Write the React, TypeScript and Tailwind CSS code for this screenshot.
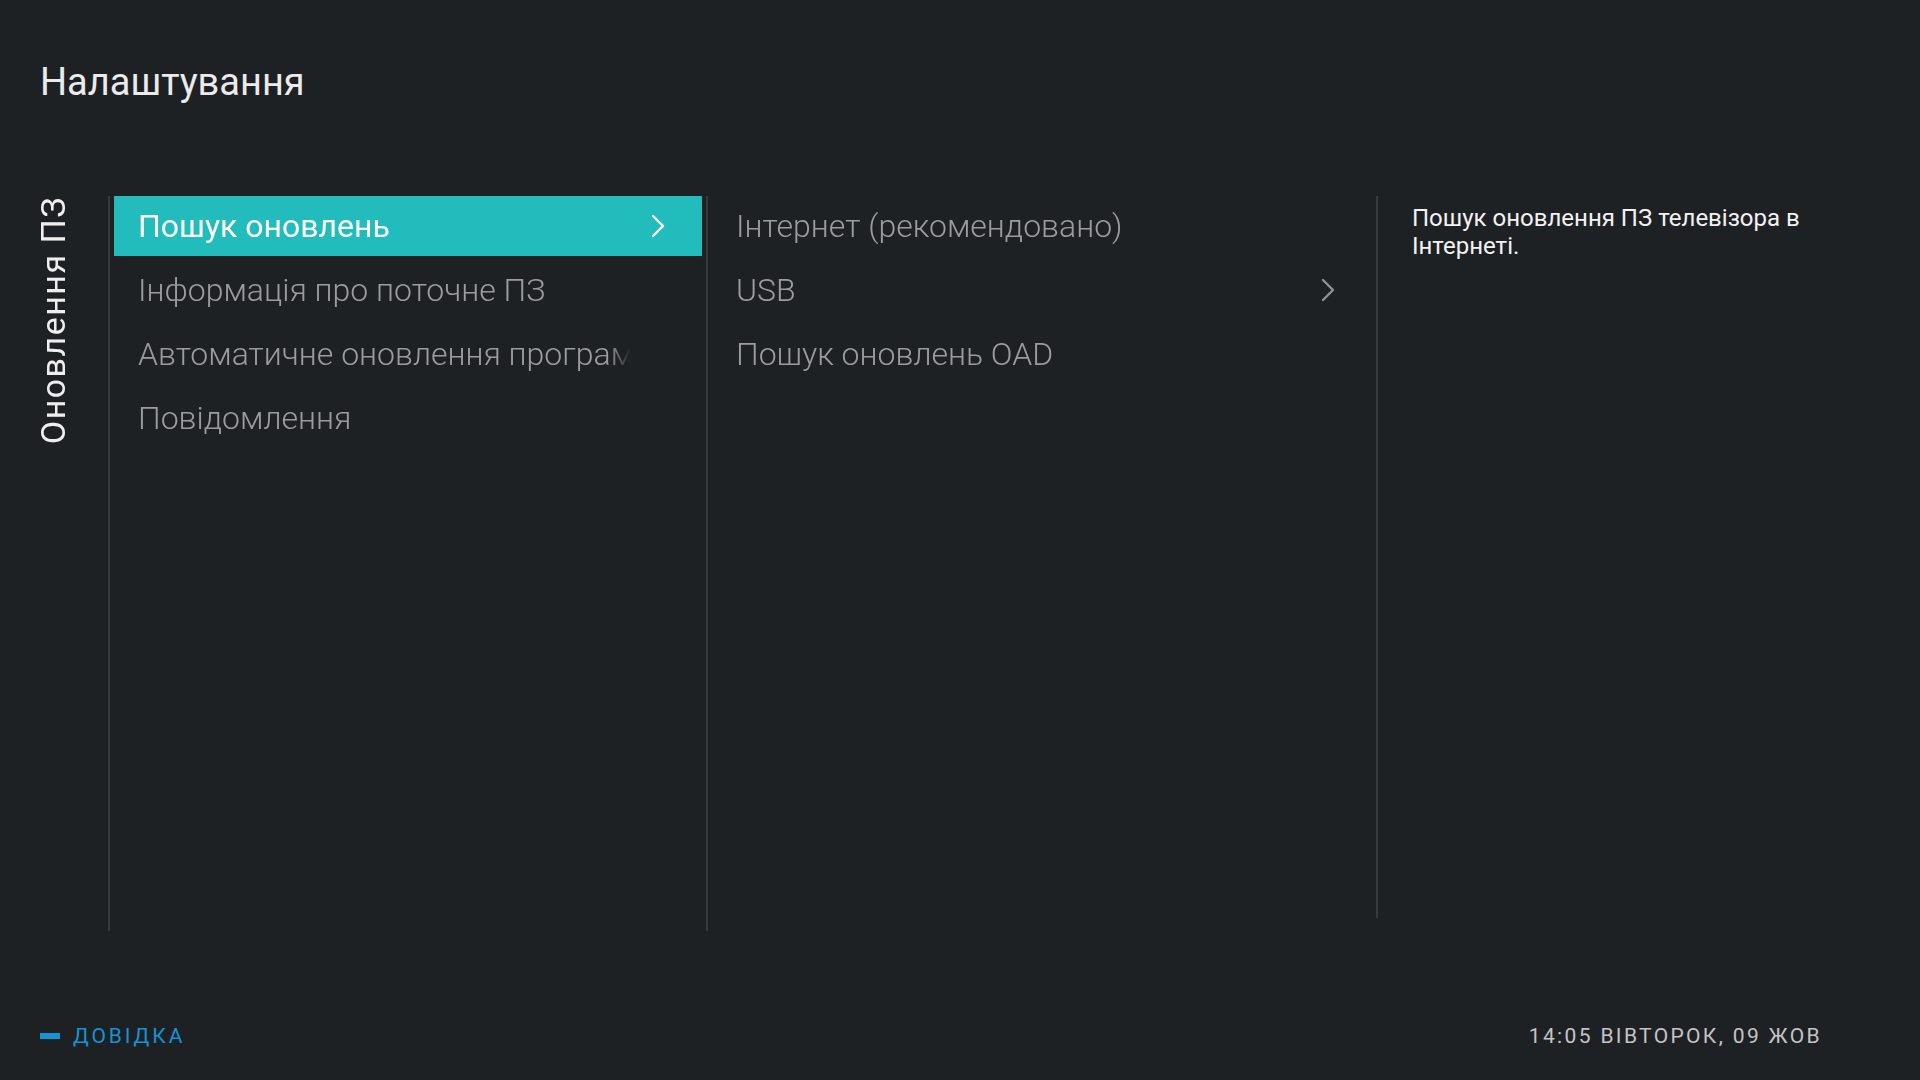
import React from "react";

const Chevron = ({ color }: { color: string }) => (
  <svg width="14" height="24" viewBox="0 0 14 24" fill="none">
    <path d="M2 2 L12 12 L2 22" stroke={color} strokeWidth="2.4" strokeLinecap="round" strokeLinejoin="round" />
  </svg>
);

type Item = { label: string; active?: boolean; arrow?: boolean };

const col1: Item[] = [
  { label: "Пошук оновлень", active: true, arrow: true },
  { label: "Інформація про поточне ПЗ" },
  { label: "Автоматичне оновлення програмного забезпечення" },
  { label: "Повідомлення" },
];

const col2: Item[] = [
  { label: "Інтернет (рекомендовано)" },
  { label: "USB", arrow: true },
  { label: "Пошук оновлень OAD" },
];

function Row({ item }: { item: Item }) {
  return (
    <div
      className={
        "h-[60px] flex items-center pl-[24px] pr-[37px] " +
        (item.active ? "bg-[#22bcbd] text-white font-normal" : "text-[#9b9c9e] font-light")
      }
    >
      <div className="flex-1 min-w-0 mr-[20px] overflow-hidden whitespace-nowrap text-[32px] leading-[40px] [mask-image:linear-gradient(to_right,black_calc(100%-22px),transparent)]">
        {item.label}
      </div>
      <div className="w-[14px] flex justify-center">
        {item.arrow ? <Chevron color={item.active ? "#ffffff" : "#8f9194"} /> : null}
      </div>
    </div>
  );
}

export default function App() {
  return (
    <div className="w-[1920px] h-[1080px] bg-[#1e2124] flex flex-col font-['Roboto',sans-serif] overflow-hidden">
      <header className="pt-[59px] pl-[40px] text-[38px] leading-[46px] text-[#ebebeb]">Налаштування</header>
      <main className="mt-[91px] flex h-[735px]">
        <aside className="w-[108px] pl-[32px] flex items-start">
          <div className="[writing-mode:vertical-rl] rotate-180 text-[34px] leading-[42px] tracking-[1.5px] text-[#eeeeee] whitespace-nowrap">
            Оновлення ПЗ
          </div>
        </aside>
        <div className="w-[2px] bg-[#36393d]" />
        <section className="w-[596px] px-[4px] flex flex-col gap-[4px]">
          {col1.map((it) => (
            <Row key={it.label} item={it} />
          ))}
        </section>
        <div className="w-[2px] bg-[#36393d]" />
        <section className="w-[668px] px-[4px] flex flex-col gap-[4px]">
          {col2.map((it) => (
            <Row key={it.label} item={it} />
          ))}
        </section>
        <div className="w-[2px] h-[722px] bg-[#36393d]" />
        <section className="flex-1 pl-[34px] pr-[60px] pt-[8px]">
          <p className="w-[420px] text-[24px] leading-[28px] text-[#f2f2f2]">
            Пошук оновлення ПЗ телевізора в Інтернеті.
          </p>
        </section>
      </main>
      <footer className="mt-auto h-[88px] flex items-center justify-between pl-[40px] pr-[98px]">
        <div className="flex items-center">
          <div className="w-[20px] h-[6px] bg-[#1593d2]" />
          <span className="ml-[13px] text-[21px] leading-[24px] tracking-[2.9px] text-[#1593d2]">ДОВІДКА</span>
        </div>
        <span className="text-[21px] leading-[24px] tracking-[2.35px] text-[#c4c4c4]">14:05 ВІВТОРОК, 09 ЖОВ</span>
      </footer>
    </div>
  );
}
